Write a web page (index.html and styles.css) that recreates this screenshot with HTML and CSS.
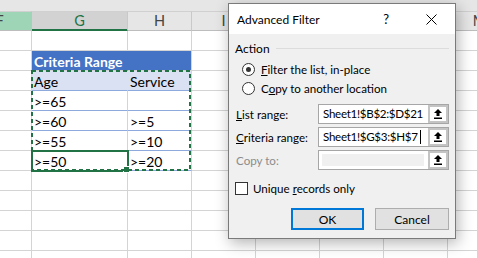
FILE: index.html
```html
<!DOCTYPE html>
<html lang="en">
  <head>
    <meta charset="UTF-8" />
    <title>Advanced Filter</title>
    <link rel="stylesheet" href="styles.css">
  </head>
  <body>
    <div class="sheet">
      <div class="strip"></div>

      <div class="grid">
        <!-- J, K, L headers sit under the dialog -->
        <div class="cell hd hd-f">F</div>
        <div class="cell hd hd-g">G</div>
        <div class="cell hd">H</div>
        <div class="cell hd">I</div>
        <div class="cell hd"></div>
        <div class="cell hd"></div>
        <div class="cell hd"></div>
        <div class="cell hd">M</div>

        <div class="cell"></div><div class="cell"></div><div class="cell"></div><div class="cell"></div>
        <div class="cell"></div><div class="cell"></div><div class="cell"></div><div class="cell"></div>

        <div class="cell"></div>
        <div class="cell tt tt-left">Criteria Range</div>
        <div class="cell tt"></div>
        <div class="cell"></div><div class="cell"></div><div class="cell"></div><div class="cell"></div><div class="cell"></div>

        <div class="cell"></div>
        <div class="cell th th-left">Age</div>
        <div class="cell th">Service</div>
        <div class="cell"></div><div class="cell"></div><div class="cell"></div><div class="cell"></div><div class="cell"></div>

        <div class="cell"></div>
        <div class="cell td">&gt;=65</div>
        <div class="cell td"></div>
        <div class="cell"></div><div class="cell"></div><div class="cell"></div><div class="cell"></div><div class="cell"></div>

        <div class="cell"></div>
        <div class="cell td">&gt;=60</div>
        <div class="cell td">&gt;=5</div>
        <div class="cell"></div><div class="cell"></div><div class="cell"></div><div class="cell"></div><div class="cell"></div>

        <div class="cell"></div>
        <div class="cell td">&gt;=55</div>
        <div class="cell td">&gt;=10</div>
        <div class="cell"></div><div class="cell"></div><div class="cell"></div><div class="cell"></div><div class="cell"></div>

        <div class="cell"></div>
        <div class="cell td sel">&gt;=50</div>
        <div class="cell td">&gt;=20</div>
        <div class="cell"></div><div class="cell"></div><div class="cell"></div><div class="cell"></div><div class="cell"></div>

        <div class="cell"></div><div class="cell"></div><div class="cell"></div><div class="cell"></div>
        <div class="cell"></div><div class="cell"></div><div class="cell"></div><div class="cell"></div>
        <div class="cell"></div><div class="cell"></div><div class="cell"></div><div class="cell"></div>
        <div class="cell"></div><div class="cell"></div><div class="cell"></div><div class="cell"></div>
        <div class="cell"></div><div class="cell"></div><div class="cell"></div><div class="cell"></div>
        <div class="cell"></div><div class="cell"></div><div class="cell"></div><div class="cell"></div>
        <div class="cell"></div><div class="cell"></div><div class="cell"></div><div class="cell"></div>
        <div class="cell"></div><div class="cell"></div><div class="cell"></div><div class="cell"></div>
        <div class="cell"></div><div class="cell"></div><div class="cell"></div><div class="cell"></div>
        <div class="cell"></div><div class="cell"></div><div class="cell"></div><div class="cell"></div>
      </div>

      <!-- copy range marquee -->
      <svg class="ants" width="160" height="101" viewBox="0 0 160 101">
        <rect x="1" y="1" width="158" height="99" fill="none" stroke="#217346" stroke-width="2" stroke-dasharray="4 3" />
      </svg>

      <div class="dialog">
        <div class="title">
          <span>Advanced Filter</span>
          <span class="help">?</span>
          <svg class="close" width="11" height="11" viewBox="0 0 11 11">
            <path d="M0.5 0.5 L10.5 10.5 M10.5 0.5 L0.5 10.5" stroke="#000" stroke-width="1" />
          </svg>
        </div>

        <div class="body">
          <div class="group">
            <span>Action</span>
            <div class="group-line"></div>
          </div>

          <div class="radio-row">
            <span class="radio on"></span>
            <span><u>F</u>ilter the list, in-place</span>
          </div>
          <div class="radio-row">
            <span class="radio"></span>
            <span>C<u>o</u>py to another location</span>
          </div>

          <div class="fields">
            <div class="field">
              <span class="label"><u>L</u>ist range:</span>
              <div class="ref">
                <div class="ref-input">Sheet1!$B$2:$D$21</div>
                <div class="pick">
                  <svg width="8" height="10" viewBox="0 0 8 10"><path d="M4 0 L8 4 H5.5 V7 H2.5 V4 H0 Z" fill="#000" /><rect x="0" y="8.5" width="8" height="1.5" fill="#000" /></svg>
                </div>
              </div>
            </div>
            <div class="field">
              <span class="label"><u>C</u>riteria range:</span>
              <div class="ref">
                <div class="ref-input">Sheet1!$G$3:$H$7<span class="caret"></span></div>
                <div class="pick">
                  <svg width="8" height="10" viewBox="0 0 8 10"><path d="M4 0 L8 4 H5.5 V7 H2.5 V4 H0 Z" fill="#000" /><rect x="0" y="8.5" width="8" height="1.5" fill="#000" /></svg>
                </div>
              </div>
            </div>
            <div class="field">
              <span class="label off">Copy to:</span>
              <div class="ref">
                <div class="ref-input ref-off"><div class="off-fill"></div></div>
                <div class="pick">
                  <svg width="8" height="10" viewBox="0 0 8 10"><path d="M4 0 L8 4 H5.5 V7 H2.5 V4 H0 Z" fill="#000" /><rect x="0" y="8.5" width="8" height="1.5" fill="#000" /></svg>
                </div>
              </div>
            </div>
          </div>

          <div class="check-row">
            <span class="check"></span>
            <span>Unique <u>r</u>ecords only</span>
          </div>

          <div class="buttons">
            <button class="btn btn-ok">OK</button>
            <button class="btn">Cancel</button>
          </div>
        </div>
      </div>
    </div>
  </body>
</html>
```

FILE: styles.css
```css
body {
  margin: 0;
  padding: 0;
  background: #fff;
  font-family: Lato, "Liberation Sans", sans-serif;
}

.sheet {
  position: relative;
  width: 477px;
  height: 258px;
  overflow: hidden;
}

.strip {
  height: 11px;
  background: #e6e6e6;
}

.grid {
  display: grid;
  grid-template-columns: 64px 96px repeat(6, 64px);
  margin-left: -32px;
}

.cell {
  position: relative;
  height: 20px;
  box-sizing: border-box;
  border-right: 1px solid #d4d4d4;
  border-bottom: 1px solid #d4d4d4;
  padding: 0 2px;
  font-size: 14px;
  line-height: 21px;
  white-space: nowrap;
  color: #000;
}

.hd {
  background: #e6e6e6;
  color: #444;
  text-align: center;
  border-top: 1px solid #d0d0d0;
  border-right-color: #c9c9c9;
  border-bottom-color: #bdbdbd;
  font-size: 14.5px;
  line-height: 18px;
}

.hd-f {
  background: #9fd5b7;
  border-right-color: #9fd5b7;
}

.hd-g {
  background: #d2d2d2;
  color: #217346;
  border-bottom-color: #217346;
  box-shadow: inset 0 -1px #217346;
}

.tt {
  background: #4472c4;
  color: #fff;
  font-weight: bold;
}

.tt-left {
  border-right-color: #4472c4;
}

.th {
  background: #d9e1f2;
  border-bottom-color: #8ea9db;
}

.th-left {
  border-right-color: #d9e1f2;
}

.td {
  border-bottom-color: #8ea9db;
}

.sel {
  z-index: 2;
  outline: 2px solid #217346;
  outline-offset: -1px;
}

.sel::after {
  content: "";
  position: absolute;
  right: -3px;
  bottom: -3px;
  width: 5px;
  height: 5px;
  background: #217346;
  border: 1px solid #fff;
}

.ants {
  position: absolute;
  left: 31px;
  top: 70px;
  z-index: 3;
}

/* dialog */

.dialog {
  position: absolute;
  left: 228px;
  top: 3px;
  width: 226px;
  height: 234px;
  z-index: 5;
  border: 1px solid #7a7a7a;
  background: #f0f0f0;
  box-shadow: 2px 4px 14px rgba(0, 0, 0, 0.3);
  font-family: Lato, "Liberation Sans", sans-serif;
  font-size: 11.6px;
  color: #000;
}

.title {
  display: flex;
  align-items: center;
  height: 30px;
  padding-left: 8px;
  background: #fff;
  font-size: 12px;
}

.help {
  margin-left: auto;
  margin-right: 37px;
  font-size: 13px;
}

.close {
  margin-right: 18px;
}

.body {
  display: flex;
  flex-direction: column;
  padding: 0 6px 0 6px;
}

.group {
  display: flex;
  align-items: center;
  height: 16px;
  margin-top: 6px;
  font-size: 12px;
}

.group-line {
  flex: 1;
  height: 1px;
  margin-left: 6px;
  background: #dcdcdc;
}

.radio-row {
  display: flex;
  align-items: center;
  height: 19px;
  padding-left: 7px;
}

.group + .radio-row {
  margin-top: 4px;
}

.radio {
  position: relative;
  width: 11px;
  height: 11px;
  margin-right: 6px;
  border: 1px solid #333;
  border-radius: 50%;
  background: #fff;
}

.radio.on::after {
  content: "";
  position: absolute;
  left: 3px;
  top: 3px;
  width: 5px;
  height: 5px;
  border-radius: 50%;
  background: #333;
}

.fields {
  display: flex;
  flex-direction: column;
  gap: 3px;
  margin-top: 6px;
}

.field {
  display: flex;
  align-items: center;
  height: 20px;
  padding-left: 1px;
}

.label {
  flex: 1;
}

.label.off {
  color: #8c8c8c;
}

.ref {
  display: flex;
  width: 131px;
  height: 20px;
  box-sizing: border-box;
  border: 1px solid #a6a6a6;
  background: #fff;
}

.ref-input {
  flex: 1;
  padding-left: 4px;
  line-height: 18px;
  white-space: nowrap;
  letter-spacing: -0.3px;
}

.ref-off {
  padding: 3px 4px 3px 3px;
}

.off-fill {
  height: 12px;
  background: #f0f0f0;
}

.caret {
  display: inline-block;
  width: 1px;
  height: 14px;
  margin-left: 2px;
  vertical-align: -3px;
  background: #000;
}

.pick {
  display: flex;
  align-items: center;
  justify-content: center;
  width: 20px;
  box-sizing: border-box;
  border: 2px solid #c4c4c4;
  background: #fff;
}

.check-row {
  display: flex;
  align-items: center;
  height: 13px;
  margin-top: 12px;
}

.check {
  width: 11px;
  height: 11px;
  margin-right: 5px;
  border: 1px solid #333;
  background: #fff;
}

.buttons {
  display: flex;
  justify-content: flex-end;
  gap: 11px;
  margin-top: 13px;
}

.btn {
  width: 74px;
  height: 22px;
  box-sizing: border-box;
  border: 1px solid #adadad;
  background: #e1e1e1;
  font-family: inherit;
  font-size: 12px;
  color: #000;
  padding: 0;
}

.btn-ok {
  width: 73px;
  border: 2px solid #0078d7;
}
```
